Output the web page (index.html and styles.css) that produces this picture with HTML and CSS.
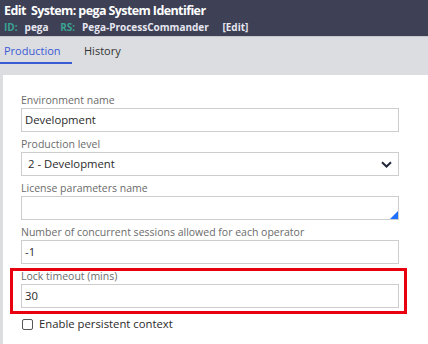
FILE: index.html
```html
<!DOCTYPE html>
<html>
<head>
<meta charset="utf-8">
<link rel="stylesheet" href="styles.css">
</head>
<body>
<div class="header">
  <div class="title">Edit&nbsp; System: pega System Identifier</div>
  <div class="sub">
    <span class="key">ID:</span><span class="val">pega</span>
    <span class="key">RS:</span><span class="val">Pega-ProcessCommander</span>
    <span class="edit">[Edit]</span>
  </div>
</div>
<div class="tabs">
  <div class="tab active">Production</div>
  <div class="tab">History</div>
</div>
<div class="panel">
  <div class="field">
    <div class="label">Environment name</div>
    <div class="input">Development</div>
  </div>
  <div class="field">
    <div class="label">Production level</div>
    <div class="input select">
      <span>2 - Development</span>
      <svg class="chev" width="11" height="7" viewBox="0 0 11 7"><path d="M1 1.2 L5.5 5.5 L10 1.2" fill="none" stroke="#23263a" stroke-width="2"/></svg>
    </div>
  </div>
  <div class="field">
    <div class="label">License parameters name</div>
    <div class="input textarea"><span class="resize"></span></div>
  </div>
  <div class="field">
    <div class="label">Number of concurrent sessions allowed for each operator</div>
    <div class="input">-1</div>
  </div>
  <div class="field highlight">
    <div class="label">Lock timeout (mins)</div>
    <div class="input">30</div>
  </div>
  <label class="check"><span class="box"></span>Enable persistent context</label>
</div>
</body>
</html>
```
FILE: styles.css
```css
* { box-sizing: border-box; }
html, body { margin: 0; padding: 0; }
body {
  width: 428px;
  height: 344px;
  overflow: hidden;
  background: #dcdde1;
  font-family: "Open Sans", "Liberation Sans", sans-serif;
}
.header {
  background: #3e4056;
  height: 37px;
  padding: 3px 0 0 4px;
  border-bottom: 1px solid #c6c7cd;
}
.title {
  color: #ffffff;
  font-weight: 700;
  font-size: 12.5px;
  line-height: 16px;
  letter-spacing: -0.6px;
}
.sub {
  font-weight: 700;
  font-size: 10px;
  line-height: 14px;
  margin-top: 1px;
  color: #e6e7f0;
}
.sub .key { color: #3aa391; margin-right: 7px; }
.sub .val { margin-right: 9px; }
.sub .edit { margin-left: 2px; }
.tabs {
  display: flex;
  height: 38px;
  padding-top: 5px;
}
.tab {
  font-size: 11px;
  color: #333;
  line-height: 16px;
  padding: 1px 4px 3px 4px;
  margin-right: 8px;
  height: 22px;
}
.tab.active {
  color: #3b5bd6;
  width: 72px;
  border-bottom: 2px solid #3b5bd6;
}
.panel {
  background: #fff;
  margin-left: 3px;
  height: 269px;
  padding: 18px 29px 0 18px;
}
.field {
  margin-bottom: 5px;
  position: relative;
}
.label {
  font-size: 10.5px;
  line-height: 15px;
  color: #6b6b6b;
  white-space: nowrap;
}
.input {
  height: 24px;
  border: 1px solid #cdcdcd;
  font-size: 11.3px;
  color: #2a2a2a;
  line-height: 22px;
  padding-left: 3px;
  position: relative;
}
.select {
  padding-left: 6px;
  display: flex;
  justify-content: space-between;
  align-items: center;
  padding-right: 6px;
}
.chev { margin-top: 1px; }
.textarea { height: 24px; }
.resize {
  position: absolute;
  right: 0;
  bottom: 0;
  width: 0;
  height: 0;
  border-left: 8px solid transparent;
  border-bottom: 8px solid #1f6fff;
}
.highlight::after {
  content: "";
  position: absolute;
  left: -11px;
  right: -8px;
  top: -1px;
  bottom: -6px;
  border: 3px solid #e8000f;
  pointer-events: none;
}
.check {
  display: flex;
  align-items: center;
  font-size: 11.3px;
  color: #2a2a2a;
  margin-top: 8px;
  margin-left: 1px;
  line-height: 16px;
}
.box {
  width: 11px;
  height: 11px;
  border: 1px solid #555;
  border-radius: 2px;
  margin-right: 6px;
  background: #fff;
}
```
